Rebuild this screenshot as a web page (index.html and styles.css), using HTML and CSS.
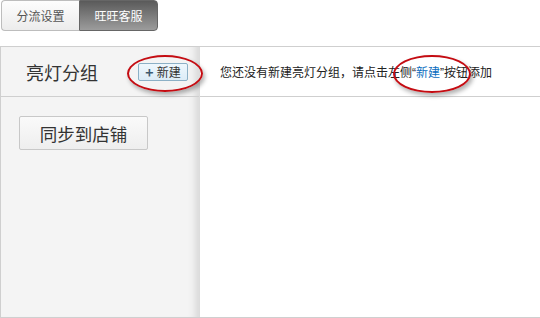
FILE: index.html
```html
<!DOCTYPE html>
<html>
<head>
    <meta charset="utf-8">
    <title>亮灯分组</title>
    <link rel="stylesheet" href="styles.css">
</head>

<body>
    <div class="tabs">
        <div class="tab">分流设置</div>
        <div class="tab active">旺旺客服</div>
    </div>

    <div class="panel">
        <div class="side">
            <div class="side-head">
                <span class="title">亮灯分组</span>
                <span class="btn-new"><b>+</b> 新建</span>
            </div>
            <div class="side-body">
                <div class="btn-sync">同步到店铺</div>
            </div>
        </div>
        <div class="main">
            <div class="main-head">
                <p class="empty">您还没有新建亮灯分组，请点击左侧“<span class="link">新建</span>”按钮添加</p>
            </div>
        </div>

        <!-- annotation marks -->
        <div class="mark mark-btn"></div>
        <div class="mark mark-text"></div>
    </div>
</body>
</html>
```

FILE: styles.css
```css
* {
    box-sizing: border-box;
}

body {
    margin: 0;
    padding: 0;
    font-family: "Noto Sans CJK SC", "Noto Sans", sans-serif;
    color: #333;
    background: #fff;
}

.tabs {
    display: flex;
    margin: 0 0 15px 1px;
}

.tab {
    width: 78px;
    height: 31px;
    display: flex;
    justify-content: center;
    align-items: center;
    font-size: 12px;
    color: #555;
    border: 1px solid #bdbdbd;
    border-right: none;
    border-radius: 4px 0 0 4px;
    background: linear-gradient(#fdfdfd, #ececec);
}

.tab.active {
    width: 79px;
    color: #fff;
    border: 1px solid #666;
    border-radius: 0 4px 4px 0;
    background: linear-gradient(#5a5a5a, #9c9c9c);
}

.panel {
    position: relative;
    display: flex;
    height: 272px;
    border: 1px solid #cfcfcf;
    border-right: none;
}

.side {
    flex-shrink: 0;
    width: 199px;
    background: #f4f4f4;
    box-shadow: inset -10px 0 8px -7px rgba(0, 0, 0, 0.13);
    border-right: 1px solid #dcdcdc;
}

.side-head {
    height: 50px;
    display: flex;
    align-items: center;
    padding-left: 25px;
    border-bottom: 1px solid #cfcfcf;
}

.title {
    font-size: 18px;
    color: #333;
}

.btn-new {
    margin-left: 40px;
    width: 50px;
    height: 18px;
    display: flex;
    justify-content: center;
    align-items: center;
    font-size: 12px;
    color: #333;
    background: linear-gradient(#eef7fd, #dcecf7);
    border: 1px solid #8cb0c6;
    border-radius: 2px;
}

.btn-new b {
    color: #3d5a70;
    font-size: 14px;
    margin-right: 3px;
    line-height: 1;
}

.side-body {
    padding: 19px 0 0 18px;
}

.btn-sync {
    width: 129px;
    height: 34px;
    display: flex;
    justify-content: center;
    align-items: center;
    font-size: 17.5px;
    color: #333;
    background: linear-gradient(#fafafa, #eeeeee);
    border: 1px solid #c8c8c8;
    border-radius: 2px;
}

.main {
    flex: 1;
    min-width: 0;
    background: #fff;
}

.main-head {
    height: 50px;
    display: flex;
    align-items: center;
    padding-left: 20px;
    border-bottom: 1px solid #cfcfcf;
}

.empty {
    margin: 0;
    font-family: "Liberation Sans", "Noto Sans CJK SC", sans-serif;
    font-size: 12px;
    color: #222;
    white-space: nowrap;
}

.link {
    color: #0b6ec0;
}

.mark {
    position: absolute;
    border: 2px solid #c40c12;
    border-radius: 50%;
    box-shadow: 2px 3px 4px rgba(0, 0, 0, 0.3);
}

.mark-btn {
    left: 126px;
    top: 8px;
    width: 76px;
    height: 37px;
}

.mark-text {
    left: 392px;
    top: 8px;
    width: 78px;
    height: 38px;
}
```
